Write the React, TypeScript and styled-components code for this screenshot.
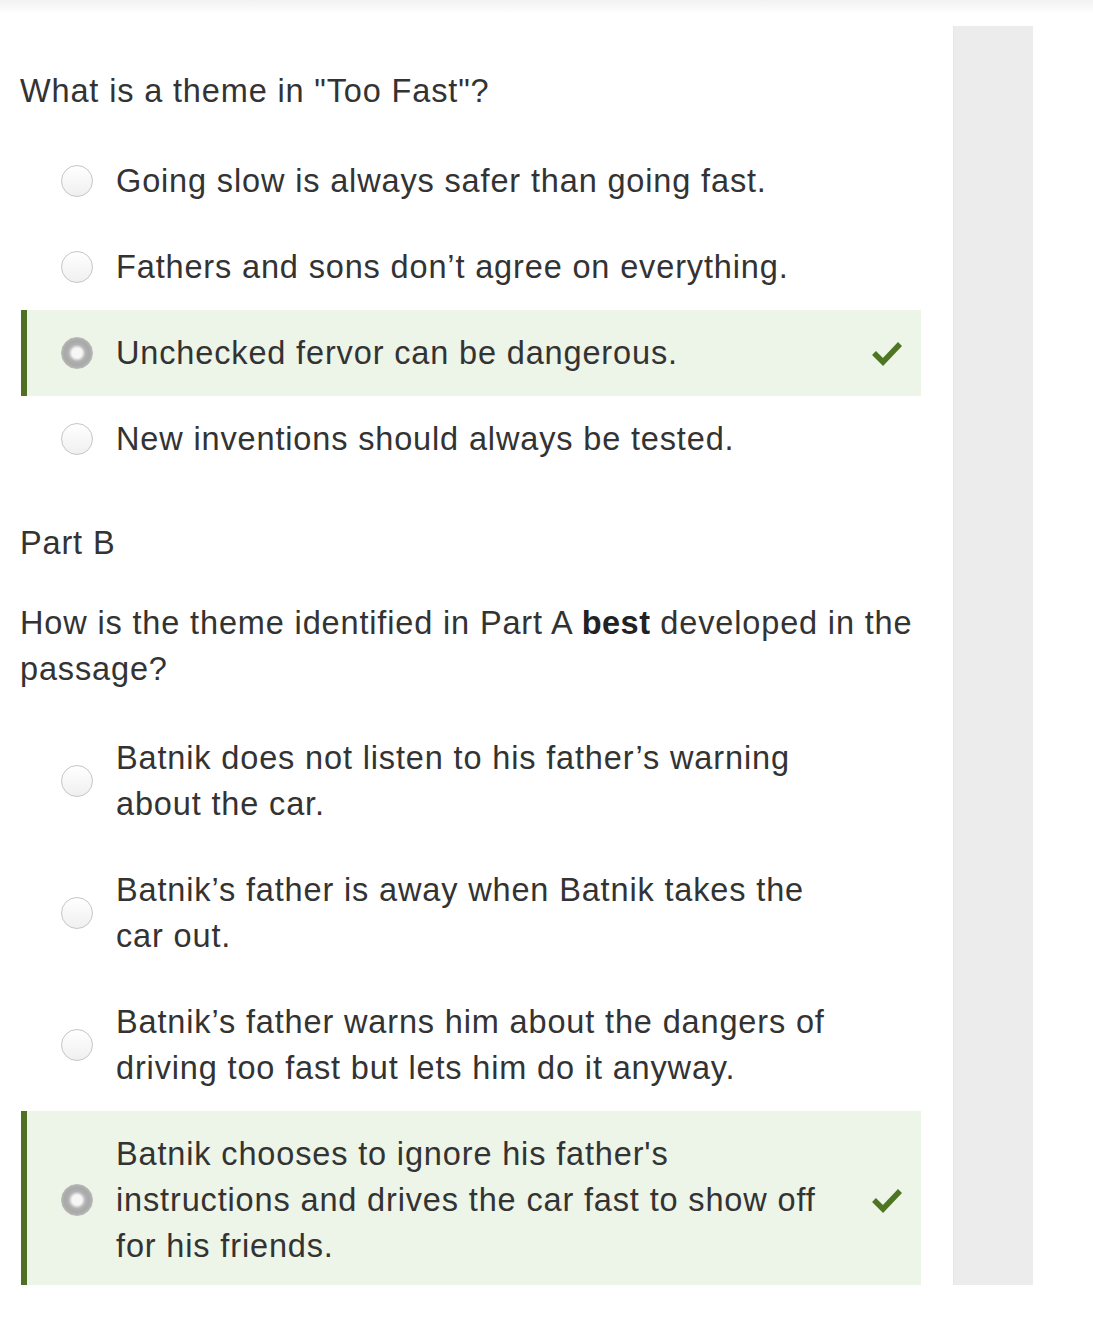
import React from "react";
import styled, { createGlobalStyle } from "styled-components";

const Global = createGlobalStyle`
  html, body { margin: 0; padding: 0; background: #fff; }
  body { font-family: "Liberation Sans", Arial, sans-serif; color: #333; }
`;

const Page = styled.div`
  position: relative;
  width: 1093px;
  height: 1321px;
  overflow: hidden;
  background: #fff;
`;

const TopShade = styled.div`
  height: 14px;
  background: linear-gradient(#f2f2f2, #fff);
`;

const Layout = styled.div`
  display: flex;
  align-items: flex-start;
  padding-top: 12px;
`;

const Main = styled.div`
  width: 901px;
  padding-left: 20px;
  padding-right: 32px;
  flex: none;
`;

const Sidebar = styled.div`
  width: 80px;
  height: 1259px;
  background: #ececec;
  border-left: 1px solid #e6e6e6;
  box-sizing: border-box;
`;

const Text = styled.p<{ $mt: number; $mb: number }>`
  margin: ${(p) => p.$mt}px 0 ${(p) => p.$mb}px;
  font-size: 32.5px;
  letter-spacing: 0.85px;
  line-height: 46px;
  color: #333;
  white-space: nowrap;
  b { font-weight: 700; color: #222; letter-spacing: 0.5px; }
`;

const Options = styled.div`
  display: flex;
  flex-direction: column;
`;

const Option = styled.div<{ $correct?: boolean; $tall?: boolean }>`
  display: flex;
  align-items: center;
  margin-left: 1px;
  padding: 20px 18px ${(p) => (p.$tall ? 16 : 20)}px 34px;
  border-left: 6px solid ${(p) => (p.$correct ? "#4f6f25" : "transparent")};
  background: ${(p) => (p.$correct ? "#edf4e8" : "transparent")};
`;

const Radio = styled.span<{ $checked?: boolean }>`
  flex: none;
  width: 32px;
  height: 32px;
  box-sizing: border-box;
  border-radius: 50%;
  ${(p) =>
    p.$checked
      ? `background: radial-gradient(circle, #f6f6f6 0 5px, #d8d8d8 6.5px, #b2b2b2 8.5px, #a8a8a8 12px, #b6b6b6 16px);
         border: 1px solid #b8b8b8;`
      : `background: linear-gradient(#ffffff, #f0f0f0);
         border: 1.5px solid #c6c6c6;`}
`;

const Label = styled.span`
  flex: 1;
  margin-left: 23px;
  font-size: 32.5px;
  letter-spacing: 0.85px;
  line-height: 46px;
  color: #333;
  white-space: nowrap;
`;

const Check = styled.svg`
  flex: none;
  width: 32px;
  height: 26px;
  margin-left: 12px;
`;

type Opt = { lines: string[]; correct?: boolean };

const OptionList = ({ items }: { items: Opt[] }) => (
  <Options>
    {items.map((o, i) => (
      <Option key={i} $correct={o.correct} $tall={o.lines.length > 2}>
        <Radio $checked={o.correct} />
        <Label>
          {o.lines.map((l, j) => (
            <React.Fragment key={j}>
              {j > 0 && <br />}
              {l}
            </React.Fragment>
          ))}
        </Label>
        {o.correct && (
          <Check viewBox="0 0 32 26">
            <path d="M3 13 L12 22 L29 4" fill="none" stroke="#4d7522" strokeWidth="5.5" />
          </Check>
        )}
      </Option>
    ))}
  </Options>
);

const part1: Opt[] = [
  { lines: ["Going slow is always safer than going fast."] },
  { lines: ["Fathers and sons don\u2019t agree on everything."] },
  { lines: ["Unchecked fervor can be dangerous."], correct: true },
  { lines: ["New inventions should always be tested."] },
];

const part2: Opt[] = [
  { lines: ["Batnik does not listen to his father\u2019s warning", "about the car."] },
  { lines: ["Batnik\u2019s father is away when Batnik takes the", "car out."] },
  { lines: ["Batnik\u2019s father warns him about the dangers of", "driving too fast but lets him do it anyway."] },
  {
    lines: [
      "Batnik chooses to ignore his father's",
      "instructions and drives the car fast to show off",
      "for his friends.",
    ],
    correct: true,
  },
];

export default function App() {
  return (
    <Page>
      <Global />
      <TopShade />
      <Layout>
        <Main>
          <Text $mt={42} $mb={24}>What is a theme in "Too Fast"?</Text>
          <OptionList items={part1} />
          <Text $mt={38} $mb={34}>Part B</Text>
          <Text $mt={0} $mb={23}>
            How is the theme identified in Part A <b>best</b> developed in the
            <br />
            passage?
          </Text>
          <OptionList items={part2} />
        </Main>
        <Sidebar />
      </Layout>
    </Page>
  );
}
